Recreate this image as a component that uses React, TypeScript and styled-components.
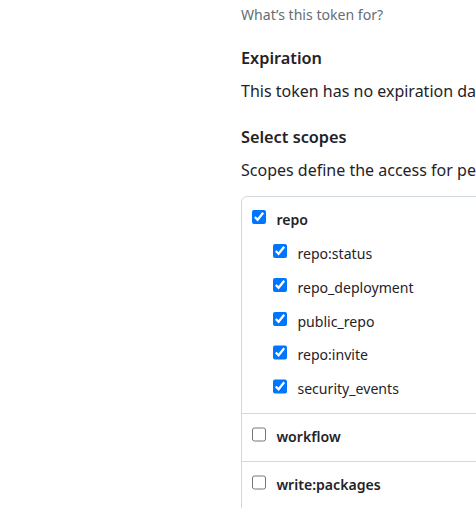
import React from "react";
import styled, { createGlobalStyle } from "styled-components";

const Global = createGlobalStyle`
  html, body { margin: 0; padding: 0; background: #ffffff; overflow: hidden; }
  body { font-family: "Noto Sans", "Liberation Sans", sans-serif; color: #1f2328; }
`;

const Page = styled.div`
  width: 640px;
  padding-left: 241px;
  padding-top: 5px;
`;

const Note = styled.div`
  font-size: 14.1px;
  line-height: 20px;
  color: #656d76;
`;

const Section = styled.section<{ $top: number }>`
  margin-top: ${(p) => p.$top}px;
`;

const Heading = styled.h3`
  margin: 0;
  font-size: 16.3px;
  line-height: 24px;
  font-weight: 600;
`;

const Text = styled.p`
  margin: 9px 0 0;
  font-size: 16px;
  line-height: 24px;
  white-space: nowrap;
`;

const ScopeBox = styled.div`
  margin-top: 14px;
  border: 1px solid #d1d9e0;
  border-radius: 6px;
`;

const Group = styled.div`
  padding: 13px 16px 14px 10px;
  display: flex;
  flex-direction: column;
  gap: 13.85px;
  & + & {
    border-top: 1px solid #d1d9e0;
  }
`;

const Children = styled.div`
  display: flex;
  flex-direction: column;
  gap: 13.85px;
  padding-left: 21px;
`;

const Row = styled.label`
  display: flex;
  align-items: flex-start;
  gap: 10px;
  font-size: 14.1px;
  line-height: 20px;
  white-space: nowrap;
`;

const Box = styled.input.attrs({ type: "checkbox" })`
  width: 14.4px;
  height: 14.4px;
  margin: 0;
  flex: none;
`;

const Name = styled.span<{ $bold?: boolean }>`
  font-weight: ${(p) => (p.$bold ? 600 : 400)};
`;

type Scope = { name: string; checked: boolean; children?: string[] };

const scopes: Scope[] = [
  {
    name: "repo",
    checked: true,
    children: ["repo:status", "repo_deployment", "public_repo", "repo:invite", "security_events"],
  },
  { name: "workflow", checked: false },
  { name: "write:packages", checked: false, children: ["read:packages"] },
];

export default function App() {
  return (
    <Page>
      <Global />
      <Note>What’s this token for?</Note>
      <Section $top={21}>
        <Heading>Expiration</Heading>
        <Text>This token has no expiration date. To set a new expiration date, regenerate the token.</Text>
      </Section>
      <Section $top={22}>
        <Heading>Select scopes</Heading>
        <Text>Scopes define the access for personal tokens.</Text>
        <ScopeBox>
          {scopes.map((s) => (
            <Group key={s.name}>
              <Row>
                <Box defaultChecked={s.checked} />
                <Name $bold>{s.name}</Name>
              </Row>
              {s.children && (
                <Children>
                  {s.children.map((c) => (
                    <Row key={c}>
                      <Box defaultChecked={s.checked} />
                      <Name>{c}</Name>
                    </Row>
                  ))}
                </Children>
              )}
            </Group>
          ))}
        </ScopeBox>
      </Section>
    </Page>
  );
}
